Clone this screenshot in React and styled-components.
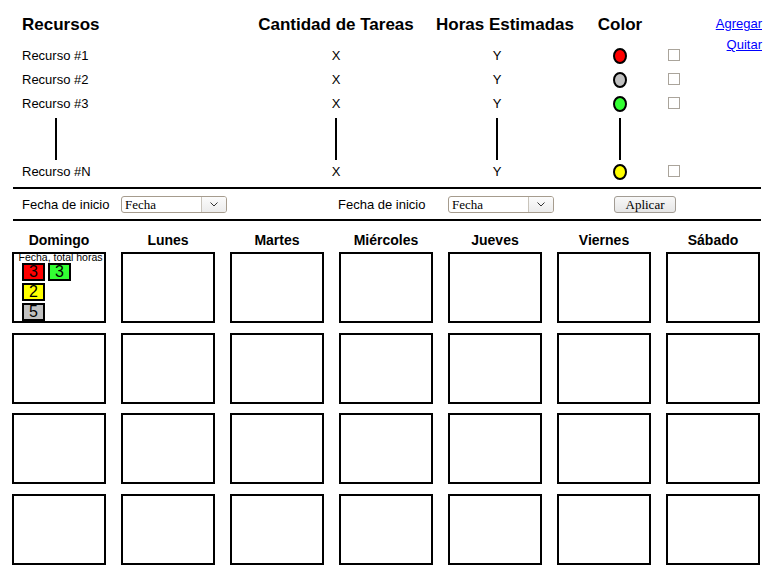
import React from "react";
import styled, { createGlobalStyle } from "styled-components";

const GlobalStyle = createGlobalStyle`
  html, body { margin: 0; padding: 0; background: #fff; }
  body { font-family: "Liberation Sans", Arial, sans-serif; color: #000; }
  * { box-sizing: border-box; }
`;

const Page = styled.div`
  width: 761px;
  padding-left: 13px;
`;

const ResourceTable = styled.div`
  display: grid;
  grid-template-columns: 214px 200px 154px 60px 30px 82px;
  grid-template-rows: 29px 24px 24px 24px 44px 24px;
  padding: 15px 0 0 9px;
  font-size: 13px;
`;

const HeadCell = styled.div`
  grid-column: ${(p) => p.$col};
  grid-row: 1;
  font-size: 17px;
  font-weight: bold;
  line-height: 20px;
  white-space: nowrap;
  text-align: ${(p) => p.$align || "left"};
  align-self: start;
`;

const Cell = styled.div`
  grid-column: ${(p) => p.$col};
  line-height: 24px;
  white-space: nowrap;
  text-align: ${(p) => p.$align || "left"};
  padding-right: ${(p) => p.$padRight || 0}px;
`;

const SwatchCell = styled.div`
  grid-column: 4;
  display: flex;
  justify-content: center;
  align-items: center;
`;

const Swatch = styled.span`
  display: block;
  width: 14px;
  height: 16px;
  border: 2px solid #000;
  border-radius: 50%;
  background: ${(p) => p.$color};
`;

const CheckCell = styled.div`
  grid-column: 5;
  display: flex;
  justify-content: flex-end;
  align-items: flex-start;
  padding-top: 5px;
`;

const Check = styled.input.attrs({ type: "checkbox" })`
  appearance: none;
  margin: 0;
  width: 12px;
  height: 12px;
  border: 1px solid #aaa49b;
  background: #fff;
`;

const LineCell = styled.div`
  grid-column: ${(p) => p.$col};
  display: flex;
  justify-content: ${(p) => (p.$start ? "flex-start" : "center")};
  padding-left: ${(p) => p.$padLeft || 0}px;
  padding-right: ${(p) => p.$padRight || 0}px;
  padding-top: 2px;
`;

const VLine = styled.span`
  display: block;
  width: 2px;
  height: 42px;
  background: #000;
`;

const Links = styled.div`
  grid-column: 6;
  grid-row: 1 / span 2;
  display: flex;
  flex-direction: column;
  align-items: flex-end;
  gap: 6px;
  margin-top: 1px;
`;

const Link = styled.a`
  font-size: 13px;
  line-height: 15px;
  color: #0000ff;
  text-decoration: underline;
`;

const Divider = styled.div`
  height: 2px;
  width: 748px;
  background: #000;
  margin-top: ${(p) => p.$mt || 0}px;
`;

const FilterBar = styled.div`
  display: grid;
  grid-template-columns: 99px 217px 110px 166px 62px;
  align-items: center;
  height: 30px;
  padding-left: 9px;
  font-size: 13px;
`;

const FilterLabel = styled.span`
  white-space: nowrap;
`;

const SelectBox = styled.div`
  display: flex;
  width: 106px;
  height: 17px;
  border: 1px solid #a69c8e;
  border-radius: 3px;
  background: #fff;
  overflow: hidden;
`;

const Select = styled.select`
  appearance: none;
  flex: 1;
  min-width: 0;
  border: none;
  background: transparent;
  font-family: "Liberation Serif", "Times New Roman", serif;
  font-size: 13px;
  line-height: 15px;
  padding: 0 3px;
  margin: 0;
  color: #000;
  outline: none;
`;

const SelectArrow = styled.span`
  width: 25px;
  display: flex;
  align-items: center;
  justify-content: center;
  border-left: 1px solid #c9c4bb;
  background: linear-gradient(#fbfbfb, #ececec);
`;

const ApplyButton = styled.button`
  width: 62px;
  height: 17px;
  padding: 0;
  border: 1px solid #a29c94;
  border-radius: 3px;
  background: linear-gradient(#f8f8f8, #e6e6e6);
  font-family: "Liberation Serif", "Times New Roman", serif;
  font-size: 13px;
  line-height: 15px;
  color: #000;
`;

const DayHeaders = styled.div`
  display: grid;
  grid-template-columns: repeat(7, 94px);
  column-gap: 15px;
  margin: 11px 0 0 -1px;
`;

const DayName = styled.div`
  font-size: 14px;
  font-weight: bold;
  line-height: 16px;
  text-align: center;
`;

const Calendar = styled.div`
  display: grid;
  grid-template-columns: repeat(7, 94px);
  grid-auto-rows: 71px;
  column-gap: 15px;
  row-gap: 9.67px;
  margin: 4px 0 0 -1px;
`;

const DayCell = styled.div`
  border: 2px solid #000;
  background: #fff;
  overflow: hidden;
`;

const CellCaption = styled.div`
  font-size: 10.5px;
  line-height: 9px;
  height: 9px;
  margin-top: -1px;
  padding-left: 3px;
  text-align: center;
  white-space: nowrap;
`;

const MiniStack = styled.div`
  display: flex;
  flex-direction: column;
  gap: 2px;
  margin: 1px 0 0 8px;
`;

const MiniRow = styled.div`
  display: flex;
  gap: 3px;
`;

const MiniBox = styled.div`
  width: 23px;
  height: 18px;
  border: 2px solid #000;
  background: ${(p) => p.$color};
  font-size: 16px;
  line-height: 14px;
  text-align: center;
`;

const Chevron = () => (
  <svg width="8" height="5" viewBox="0 0 8 5" aria-hidden="true">
    <path d="M0.5 0.5 L4 4 L7.5 0.5" fill="none" stroke="#333" strokeWidth="1" />
  </svg>
);

const DateSelect = () => (
  <SelectBox>
    <Select defaultValue="Fecha">
      <option>Fecha</option>
    </Select>
    <SelectArrow>
      <Chevron />
    </SelectArrow>
  </SelectBox>
);

const resources = [
  { name: "Recurso #1", color: "#ff0000" },
  { name: "Recurso #2", color: "#c0c0c0" },
  { name: "Recurso #3", color: "#33ff33" },
];

const days = ["Domingo", "Lunes", "Martes", "Miércoles", "Jueves", "Viernes", "Sábado"];

const ResourceRow = ({ name, color }) => (
  <>
    <Cell $col={1}>{name}</Cell>
    <Cell $col={2} $align="center">X</Cell>
    <Cell $col={3} $align="center" $padRight={32}>Y</Cell>
    <SwatchCell>
      <Swatch $color={color} />
    </SwatchCell>
    <CheckCell>
      <Check />
    </CheckCell>
  </>
);

export default function App() {
  return (
    <>
      <GlobalStyle />
      <Page>
        <ResourceTable>
          <HeadCell $col={1}>Recursos</HeadCell>
          <HeadCell $col={2} $align="center">Cantidad de Tareas</HeadCell>
          <HeadCell $col={3}>Horas Estimadas</HeadCell>
          <HeadCell $col={4} $align="center">Color</HeadCell>
          <Links>
            <Link href="#">Agregar</Link>
            <Link href="#">Quitar</Link>
          </Links>
          {resources.map((r) => (
            <ResourceRow key={r.name} {...r} />
          ))}
          <LineCell $col={1} $start $padLeft={33}><VLine /></LineCell>
          <LineCell $col={2}><VLine /></LineCell>
          <LineCell $col={3} $padRight={32}><VLine /></LineCell>
          <LineCell $col={4}><VLine /></LineCell>
          <ResourceRow name="Recurso #N" color="#ffff00" />
        </ResourceTable>
        <Divider $mt={3} />
        <FilterBar>
          <FilterLabel>Fecha de inicio</FilterLabel>
          <DateSelect />
          <FilterLabel>Fecha de inicio</FilterLabel>
          <DateSelect />
          <ApplyButton>Aplicar</ApplyButton>
        </FilterBar>
        <Divider />
        <DayHeaders>
          {days.map((d) => (
            <DayName key={d}>{d}</DayName>
          ))}
        </DayHeaders>
        <Calendar>
          <DayCell>
            <CellCaption>Fecha, total horas</CellCaption>
            <MiniStack>
              <MiniRow>
                <MiniBox $color="#ff0000">3</MiniBox>
                <MiniBox $color="#33ff33">3</MiniBox>
              </MiniRow>
              <MiniRow>
                <MiniBox $color="#ffff00">2</MiniBox>
              </MiniRow>
              <MiniRow>
                <MiniBox $color="#c0c0c0">5</MiniBox>
              </MiniRow>
            </MiniStack>
          </DayCell>
          {Array.from({ length: 27 }, (_, i) => (
            <DayCell key={i} />
          ))}
        </Calendar>
      </Page>
    </>
  );
}
